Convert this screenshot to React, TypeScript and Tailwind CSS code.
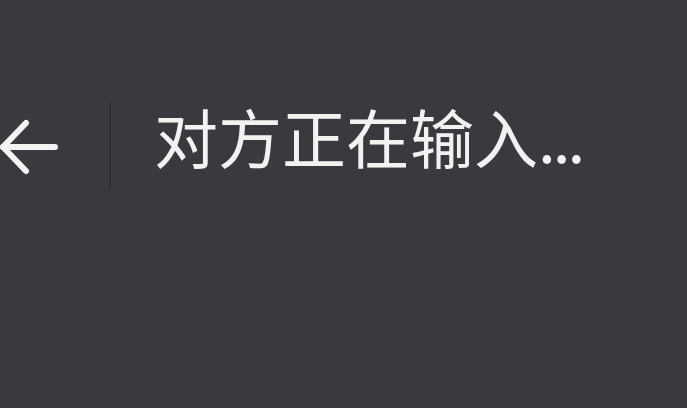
export default function App() {
  return (
    <div className="h-[408px] w-[687px] overflow-hidden bg-[#393a3e]">
      <div className="mt-[103px] flex h-[87px] items-center">
        <svg
          className="h-[60px] w-[60px] shrink-0"
          viewBox="0 0 60 60"
          fill="none"
          stroke="#f4f4f4"
          strokeWidth="6"
          strokeLinecap="round"
          strokeLinejoin="round"
        >
          <path d="M3 30H55" />
          <path d="M26 6L3 30L26 54" />
        </svg>
        <div className="ml-[49px] h-[87px] w-[2px] shrink-0 bg-[#2f3034]" />
        <div
          className="mb-[24px] ml-[43px] text-[64px] leading-none text-[#f2f2f2]"
          style={{ fontFamily: '"Noto Sans CJK SC", "Noto Sans", sans-serif' }}
        >
          对方正在输入<span className="tracking-[-3px]">...</span>
        </div>
      </div>
    </div>
  );
}
